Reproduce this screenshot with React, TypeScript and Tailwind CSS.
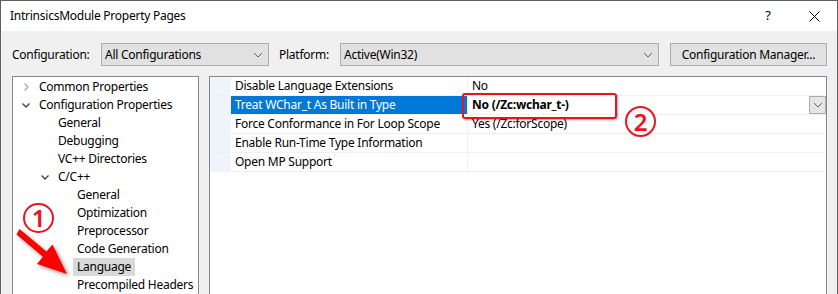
import React from "react";

const FONT = { fontFamily: '"Noto Sans", "Segoe UI", sans-serif', letterSpacing: "-0.25px" };

function Chevron({ open, muted }: { open?: boolean; muted?: boolean }) {
  return (
    <svg width="10" height="10" viewBox="0 0 10 10" className="shrink-0">
      {open ? (
        <polyline points="1.5,3.5 5,7 8.5,3.5" fill="none" stroke={muted ? "#a6a6a6" : "#404040"} strokeWidth="1.3" />
      ) : (
        <polyline points="3.5,1.5 7,5 3.5,8.5" fill="none" stroke={muted ? "#a6a6a6" : "#404040"} strokeWidth="1.3" />
      )}
    </svg>
  );
}

function ComboArrow() {
  return (
    <svg width="10" height="6" viewBox="0 0 10 6">
      <polyline points="1,1 5,5 9,1" fill="none" stroke="#606060" strokeWidth="1" />
    </svg>
  );
}

const tree = [
  { label: "Common Properties", indent: 0, chevron: "closed" },
  { label: "Configuration Properties", indent: 0, chevron: "open" },
  { label: "General", indent: 1 },
  { label: "Debugging", indent: 1 },
  { label: "VC++ Directories", indent: 1 },
  { label: "C/C++", indent: 1, chevron: "open" },
  { label: "General", indent: 2 },
  { label: "Optimization", indent: 2 },
  { label: "Preprocessor", indent: 2 },
  { label: "Code Generation", indent: 2 },
  { label: "Language", indent: 2, selected: true },
  { label: "Precompiled Headers", indent: 2 },
];

const props = [
  { name: "Disable Language Extensions", value: "No" },
  { name: "Treat WChar_t As Built in Type", value: "No (/Zc:wchar_t-)", selected: true },
  { name: "Force Conformance in For Loop Scope", value: "Yes (/Zc:forScope)" },
  { name: "Enable Run-Time Type Information", value: "" },
  { name: "Open MP Support", value: "" },
];

export default function App() {
  return (
    <div className="relative w-[838px] h-[294px] overflow-hidden bg-[#f0f0f0] border-l border-t border-r border-[#5f5f5f] text-[12px] text-black" style={FONT}>
      {/* title bar */}
      <div className="h-[30px] bg-white flex items-center pl-[9px]">
        <span className="flex-1">IntrinsicsModule Property Pages</span>
        <span className="w-[20px] mr-[13px] text-center text-[13px]">?</span>
        <span className="w-[46px] flex justify-center">
          <svg width="11" height="11" viewBox="0 0 11 11">
            <path d="M0.5 0.5 L10.5 10.5 M10.5 0.5 L0.5 10.5" stroke="#000" strokeWidth="1" />
          </svg>
        </span>
      </div>

      {/* config row */}
      <div className="flex items-center pl-[11px] pt-[12px] h-[35px]">
        <span className="w-[89px]">Configuration:</span>
        <div className="w-[168px] h-[23px] bg-[#e1e1e1] border border-[#adadad] flex items-center justify-between pl-[3px] pr-[5px]">
          <span>All Configurations</span>
          <ComboArrow />
        </div>
        <span className="w-[61px] ml-[10px]">Platform:</span>
        <div className="w-[319px] h-[23px] bg-[#e1e1e1] border border-[#adadad] flex items-center justify-between pl-[3px] pr-[5px]">
          <span>Active(Win32)</span>
          <ComboArrow />
        </div>
        <div className="ml-[11px] w-[157px] h-[23px] bg-[#e1e1e1] border border-[#adadad] flex items-center justify-center">
          Configuration Manager...
        </div>
      </div>

      {/* panels */}
      <div className="flex pl-[11px] pt-[10px] gap-[10px]">
        <div className="w-[187px] h-[230px] bg-white border border-[#828790] pt-[1px]">
          {tree.map((t, i) => (
            <div key={i} className="h-[18px] flex items-center" style={{ paddingLeft: 8 + t.indent * 19 }}>
              <span className="w-[18px] flex items-center">
                {t.chevron && <Chevron open={t.chevron === "open"} muted={t.chevron === "closed"} />}
              </span>
              <span className={t.selected ? "bg-[#d9d9d9] px-[4px] -ml-[4px] h-[18px] leading-[18px]" : ""}>{t.label}</span>
            </div>
          ))}
        </div>

        <div className="w-[618px] h-[230px] bg-white border border-[#828790] relative">
          {props.map((p, i) => (
            <div key={i} className="flex h-[19px] border-b border-[#f0f0f5]">
              <div className="w-[21px] bg-[#f0f4fb]" />
              <div className={`w-[236px] flex items-center pl-[4px] ${p.selected ? "bg-[#0078d7] text-white" : ""}`}>{p.name}</div>
              <div className="w-px bg-[#f0f0f0]" />
              <div className={`flex-1 flex items-center justify-between pl-[4px] ${p.selected ? "font-bold" : ""}`}>
                <span>{p.value}</span>
                {p.selected && (
                  <div className="w-[17px] h-[18px] bg-[#e5e5e5] border border-[#adadad] flex items-center justify-center">
                    <ComboArrow />
                  </div>
                )}
              </div>
            </div>
          ))}
        </div>
      </div>

      {/* annotations */}
      <div className="absolute left-[461px] top-[92px] w-[155px] h-[26px] border-[2.5px] border-[#e8141e] rounded-[3px] shadow-[1px_1px_2px_rgba(0,0,0,0.35)]" />
      <div className="absolute left-[624px] top-[105px] w-[31px] h-[31px] rounded-full border-2 border-[#e8141e] flex items-center justify-center text-[#e8141e] text-[24px] font-semibold leading-none">
        2
      </div>
      <div className="absolute left-[22px] top-[202px] w-[31px] h-[30px] rounded-full border-2 border-[#e8141e] flex items-center justify-center text-[#e8141e] text-[24px] font-semibold leading-none">
        1
      </div>
      <svg className="absolute left-0 top-0 drop-shadow-[2px_2px_2px_rgba(0,0,0,0.4)]" width="90" height="294" viewBox="0 0 90 294">
        <polygon
          points="18.5,228 45.5,250.6 51.5,243.5 66,273 36,263 41.9,255.8 15.5,233.6"
          fill="#ff0000"
        />
      </svg>
    </div>
  );
}
